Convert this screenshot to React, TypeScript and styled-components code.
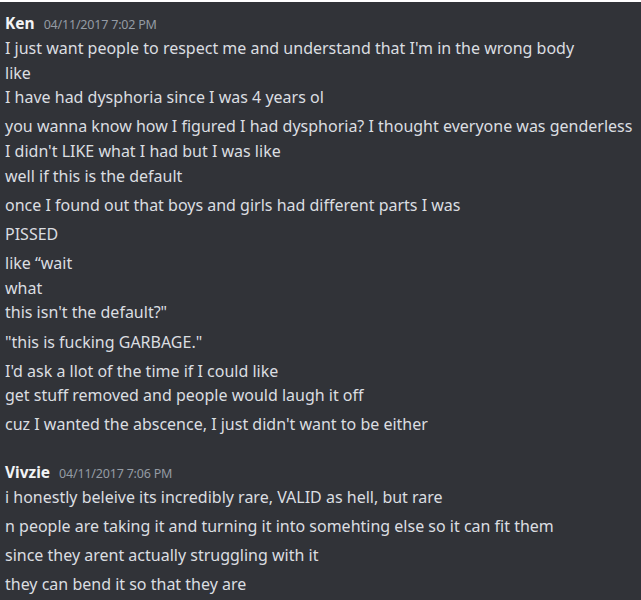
import styled, { createGlobalStyle } from "styled-components";

const GlobalStyle = createGlobalStyle`
    html, body {
        margin: 0;
        padding: 0;
        background: #313338;
    }
`;

const StyledWrapper = styled.div`
    width: 641px;
    height: 600px;
    overflow: hidden;
    background-color: #313338;
    border-top: 2px solid #ffffff;
    box-sizing: border-box;
    font-family: "Noto Sans", "Open Sans", sans-serif;
    color: #dbdee1;
`;

// Message group

const StyledGroup = styled.div`
    padding: 0px 5px;
    & + & {
        margin-top: 9px;
    }
`;
const StyledHeader = styled.div`
    display: flex;
    align-items: baseline;
    gap: 9px;
    height: 25px;
    line-height: 25px;
    padding-top: 9px;
`;
const StyledName = styled.span`
    font-size: 15.5px;
    font-weight: 700;
    color: #f2f3f5;
`;
const StyledTime = styled.span`
    font-size: 12.5px;
    color: #949ba4;
    letter-spacing: -0.2px;
`;

// Message

const StyledMessage = styled.div`
    font-size: 16px;
    line-height: 24.6px;
    padding-bottom: 4.6px;
    white-space: nowrap;
`;

interface Group {
    name: string;
    time: string;
    messages: string[][];
}

const groups: Group[] = [
    {
        name: "Ken",
        time: "04/11/2017 7:02 PM",
        messages: [
            [
                "I just want people to respect me and understand that I'm in the wrong body",
                "like",
                "I have had dysphoria since I was 4 years ol",
            ],
            [
                "you wanna know how I figured I had dysphoria? I thought everyone was genderless",
                "I didn't LIKE what I had but I was like",
                "well if this is the default",
            ],
            ["once I found out that boys and girls had different parts I was"],
            ["PISSED"],
            ["like \u201cwait", "what", "this isn't the default?\""],
            ["\"this is fucking GARBAGE.\""],
            ["I'd ask a llot of the time if I could like", "get stuff removed and people would laugh it off"],
            ["cuz I wanted the abscence, I just didn't want to be either"],
        ],
    },
    {
        name: "Vivzie",
        time: "04/11/2017 7:06 PM",
        messages: [
            ["i honestly beleive its incredibly rare, VALID as hell, but rare"],
            ["n people are taking it and turning it into somehting else so it can fit them"],
            ["since they arent actually struggling with it"],
            ["they can bend it so that they are"],
        ],
    },
];

const App = () => {
    return (
        <>
            <GlobalStyle />
            <StyledWrapper>
                {groups.map((group) => (
                    <StyledGroup key={group.name}>
                        <StyledHeader>
                            <StyledName>{group.name}</StyledName>
                            <StyledTime>{group.time}</StyledTime>
                        </StyledHeader>
                        {group.messages.map((lines, i) => (
                            <StyledMessage key={i}>
                                {lines.map((line, j) => (
                                    <div key={j}>{line}</div>
                                ))}
                            </StyledMessage>
                        ))}
                    </StyledGroup>
                ))}
            </StyledWrapper>
        </>
    );
};

export default App;
